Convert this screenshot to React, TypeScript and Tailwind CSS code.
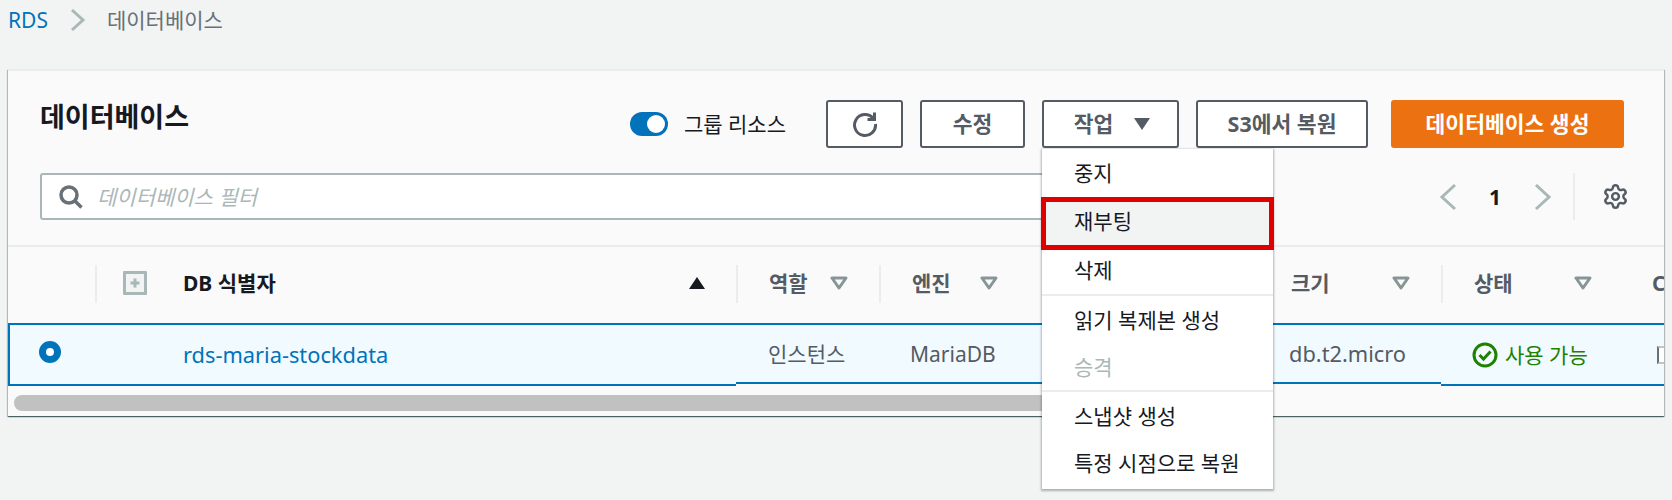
import React from "react";
import { Settings } from "lucide-react";

const F = "[font-family:'Noto_Sans','Noto_Sans_CJK_KR',sans-serif]";

function FilterIcon({ className = "" }: { className?: string }) {
  return (
    <svg width="18" height="14" viewBox="0 0 18 14" className={className}>
      <path d="M2 2 H16 L9 12 Z" fill="none" stroke="#879596" strokeWidth="3" strokeLinejoin="round" />
    </svg>
  );
}

function HeaderCell({ w, label, ml, iconGap, clip }: { w: string; label: string; ml: string; iconGap: string; clip?: boolean }) {
  return (
    <div className={`${w} h-[76px] pb-[4px] flex items-center shrink-0`}>
      <div className="w-[2px] h-[38px] bg-[#eaeded] mt-[1px]" />
      <span className={`${ml} font-bold text-[#545b64] ${iconGap}`}>{label}</span>
      {!clip && <FilterIcon />}
    </div>
  );
}

function Btn({ w, children }: { w: string; children: React.ReactNode }) {
  return (
    <button className={`${w} h-[48px] border-2 border-[#545b64] rounded-[3px] bg-white text-[#545b64] text-[21.5px] font-bold flex items-center justify-center shrink-0`}>
      {children}
    </button>
  );
}

function MenuItem({ children, hi, h = "h-[47px]" }: { children: React.ReactNode; hi?: boolean; h?: string }) {
  return (
    <div className={`${h} pl-[32px] flex items-center text-[#16191f] ${hi ? "bg-[#f2f3f3]" : ""}`}>
      {children}
    </div>
  );
}

export default function App() {
  return (
    <div className={`${F} relative w-[1672px] h-[500px] overflow-hidden bg-[#f2f3f3] text-[21px] leading-[28px] text-[#16191f]`}>
      {/* breadcrumb */}
      <div className="h-[69px] pl-[8px] pb-[29px] flex items-center">
        <span className="text-[#0073bb]">RDS</span>
        <svg width="18" height="24" viewBox="0 0 18 24" className="ml-[21px]">
          <path d="M3 2 L14 12 L3 22" fill="none" stroke="#aab7b8" strokeWidth="3" />
        </svg>
        <span className="ml-[20px] text-[#687078]">데이터베이스</span>
      </div>

      {/* card */}
      <div className="relative ml-[8px] w-[1656px] h-[347px] bg-[#fafafa] border-t-2 border-[#eaeded] shadow-[0_1px_1px_0_rgba(0,28,36,0.5),1px_1px_1px_0_rgba(0,28,36,0.2),-1px_1px_1px_0_rgba(0,28,36,0.2)]">
        <div className="h-full overflow-hidden">
          <div className="h-[29px]" />
          <div className="h-[48px] pl-[32px] pr-[40px] flex items-center">
            <h1 className="text-[27px] font-bold flex-1 leading-[34px] mb-[14px]">데이터베이스</h1>
            <div className="w-[38px] h-[24px] rounded-full bg-[#0073bb] relative mr-[16px]">
              <div className="absolute right-[3px] top-[3px] w-[18px] h-[18px] rounded-full bg-white" />
            </div>
            <span className="mr-[40px] text-[#16191f]">그룹 리소스</span>
            <Btn w="w-[77px]">
              <svg width="28" height="28" viewBox="0 0 28 28">
                <path d="M22 8.2 A10.5 10.5 0 1 0 24.5 14" fill="none" stroke="#545b64" strokeWidth="3" />
                <path d="M23.5 2.5 V9.5 H16.5" fill="none" stroke="#545b64" strokeWidth="3" />
              </svg>
            </Btn>
            <div className="w-[17px]" />
            <Btn w="w-[105px]">수정</Btn>
            <div className="w-[17px]" />
            <Btn w="w-[137px]">
              <span className="ml-[4px]">작업</span>
              <svg width="18" height="14" viewBox="0 0 18 14" className="ml-[20px]">
                <path d="M1 1 H17 L9 13 Z" fill="#545b64" />
              </svg>
            </Btn>
            <div className="w-[17px]" />
            <Btn w="w-[172px]">S3에서 복원</Btn>
            <div className="w-[23px]" />
            <button className="w-[233px] h-[48px] rounded-[3px] bg-[#ec7211] text-white text-[21.5px] font-bold shrink-0">데이터베이스 생성</button>
          </div>

          <div className="mt-[25px] h-[47px] pl-[32px] flex items-center">
            <div className="w-[1060px] h-[47px] border-2 border-[#aab7b8] rounded-[3px] bg-white flex items-center pl-[16px] shrink-0">
              <svg width="26" height="26" viewBox="0 0 26 26">
                <circle cx="11" cy="11" r="8" fill="none" stroke="#687078" strokeWidth="3.5" />
                <path d="M16.5 16.5 L23.5 23.5" stroke="#687078" strokeWidth="3.5" />
              </svg>
              <span className="ml-[13px] italic text-[#aab7b8]">데이터베이스 필터</span>
            </div>
            <svg width="20" height="30" viewBox="0 0 20 30" className="ml-[338px]">
              <path d="M17 3 L4 15 L17 27" fill="none" stroke="#aab7b8" strokeWidth="3" />
            </svg>
            <span className="ml-[29px] w-[16px] font-bold text-center">1</span>
            <svg width="20" height="30" viewBox="0 0 20 30" className="ml-[30px]">
              <path d="M3 3 L16 15 L3 27" fill="none" stroke="#aab7b8" strokeWidth="3" />
            </svg>
            <div className="ml-[20px] w-[2px] h-[47px] bg-[#eaeded]" />
            <Settings size={27} strokeWidth={2.2} color="#545b64" className="ml-[27px]" />
          </div>

          <div className="mt-[25px] h-[2px] bg-[#eaeded]" />

          {/* table header */}
          <div className="flex h-[76px] whitespace-nowrap">
            <div className="w-[87px] shrink-0" />
            <div className="w-[641px] h-[76px] pb-[4px] flex items-center shrink-0 relative">
              <div className="w-[2px] h-[38px] bg-[#eaeded] mt-[1px]" />
              <svg width="24" height="24" viewBox="0 0 24 24" className="ml-[26px]">
                <rect x="0" y="0" width="24" height="24" rx="1" fill="#aab7b8" />
                <rect x="3" y="3" width="18" height="18" fill="#f2f3f3" />
                <path d="M12 7.5 V16.5 M7.5 12 H16.5" stroke="#aab7b8" strokeWidth="3" />
              </svg>
              <span className="ml-[36px] font-bold">DB 식별자</span>
              <svg width="18" height="14" viewBox="0 0 18 14" className="absolute left-[593px] top-[29px]">
                <path d="M1 13 H17 L9 1 Z" fill="#16191f" />
              </svg>
            </div>
            <HeaderCell w="w-[143px]" label="역할" ml="ml-[31px]" iconGap="mr-[22px]" />
            <HeaderCell w="w-[149px]" label="엔진" ml="ml-[31px]" iconGap="mr-[29px]" />
            <div className="w-[244px] shrink-0" />
            <div className="w-[169px] h-[76px] pb-[4px] flex items-center shrink-0">
              <span className="ml-[19px] mr-[62px] font-bold text-[#545b64]">크기</span>
              <FilterIcon />
            </div>
            <HeaderCell w="w-[181px]" label="상태" ml="ml-[31px]" iconGap="mr-[61px]" />
            <HeaderCell w="w-[60px]" label="CPU" ml="ml-[30px]" iconGap="" clip />
          </div>

          {/* selected row */}
          <div className="flex items-start bg-[#fafafa] h-[63px] whitespace-nowrap">
            <div className="w-[728px] h-[63px] bg-[#f1faff] border-2 border-r-0 border-[#0073bb] flex items-center shrink-0">
              <div className="ml-[29px] w-[22px] h-[22px] rounded-full border-[7px] border-[#0073bb] bg-white mb-[6px]" />
              <span className="ml-[122px] text-[21.8px] text-[#0073bb]">rds-maria-stockdata</span>
            </div>
            <div className="h-[61px] flex bg-[#f1faff] border-y-2 border-[#0073bb] shrink-0 items-center text-[#545b64]">
              <div className="w-[143px] pl-[32px]">인스턴스</div>
              <div className="w-[149px] pl-[31px]">MariaDB</div>
              <div className="w-[244px]" />
              <div className="w-[169px] pl-[17px] text-[21.8px]">db.t2.micro</div>
            </div>
            <div className="flex-1 h-[63px] bg-[#f1faff] border-y-2 border-[#0073bb] flex items-center pl-[31px] text-[#1d8102]">
              <svg width="26" height="26" viewBox="0 0 26 26" className="shrink-0">
                <circle cx="13" cy="13" r="11" fill="none" stroke="#1d8102" strokeWidth="3" />
                <path d="M7.5 13 L11.5 17 L18.5 9.5" fill="none" stroke="#1d8102" strokeWidth="3" />
              </svg>
              <span className="ml-[7px]">사용 가능</span>
              <div className="ml-[69px] w-[12px] h-[18px] border-2 border-[#c4c4c4] border-l-[#687078] bg-white shrink-0" />
            </div>
          </div>

          {/* scrollbar */}
          <div className="mt-[9px] ml-[6px] w-[1100px] h-[16px] rounded-full bg-[#c1c1c1]" />
        </div>
      </div>

      {/* dropdown menu */}
      <div className="absolute left-[1042px] top-[149px] w-[231px] h-[340px] bg-white shadow-[0_1px_2px_1px_rgba(0,28,36,0.3)]">
        <MenuItem h="h-[48px]">중지</MenuItem>
        <div className="absolute left-[-1px] top-[48px] w-[233px] h-[53px] border-[5px] border-[#e00000] z-10" />
        <MenuItem hi h="h-[48px]">재부팅</MenuItem>
        <MenuItem h="h-[49px]">삭제</MenuItem>
        <div className="h-[2px] bg-[#eaeded]" />
        <MenuItem>읽기 복제본 생성</MenuItem>
        <MenuItem>
          <span className="text-[#aab7b8]">승격</span>
        </MenuItem>
        <div className="h-[2px] bg-[#eaeded]" />
        <MenuItem>스냅샷 생성</MenuItem>
        <MenuItem>특정 시점으로 복원</MenuItem>
      </div>
    </div>
  );
}
